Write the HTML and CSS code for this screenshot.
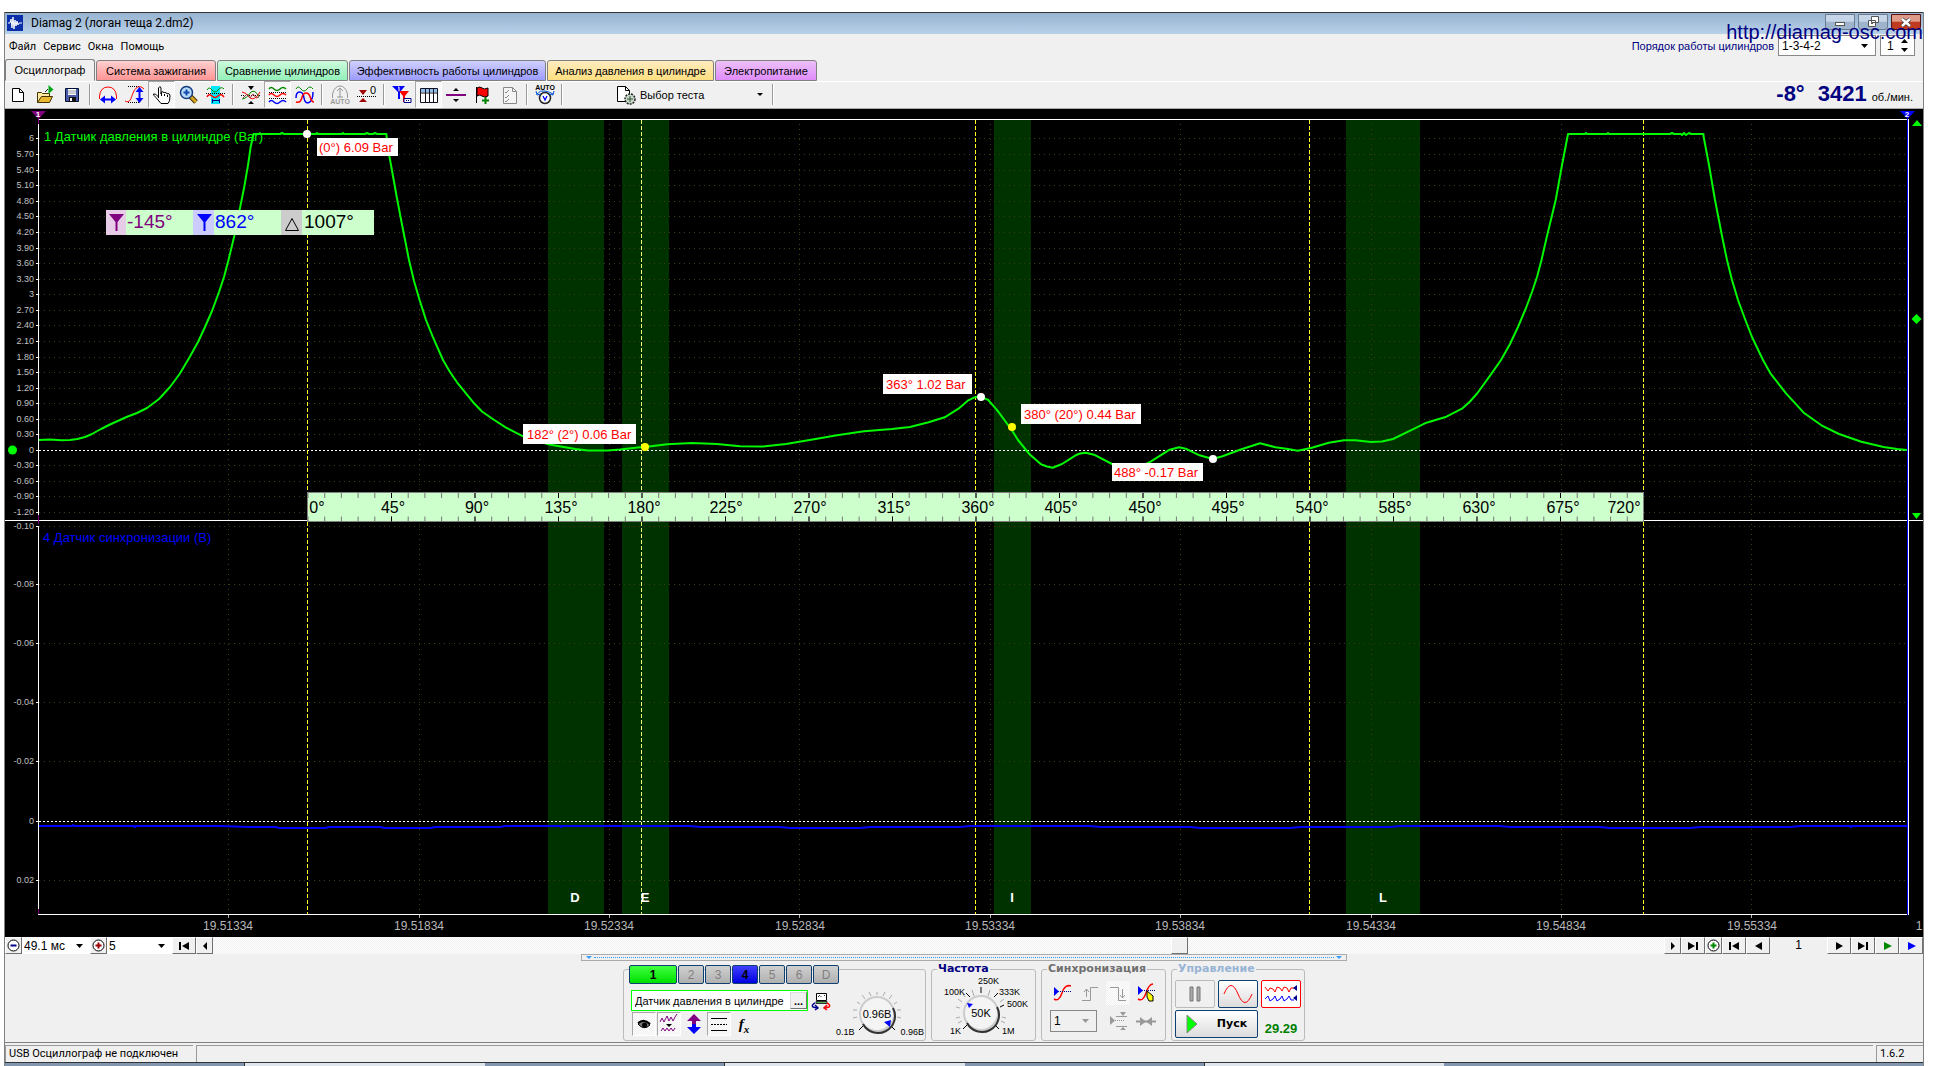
FILE: index.html
```html
<!DOCTYPE html>
<html lang="ru">
<head>
<meta charset="utf-8">
<title>Diamag 2</title>
<link rel="stylesheet" href="styles.css">
</head>
<body>
<div class="window">
  <header class="titlebar">
    <svg class="logo" width="16" height="16" viewBox="0 0 16 16"><rect width="16" height="16" fill="#0a2fa8"/><path d="M1 8h2l1-4 1 9 1-11 1 12 1-9 1 6 1-5 1 4 1-2h3" fill="none" stroke="#fff"/></svg>
    <h1 class="title">Diamag 2 (логан теща 2.dm2)</h1>
    <div class="winbtns">
      <button class="wbtn" aria-label="Свернуть"><svg width="12" height="12" viewBox="0 0 12 12"><rect x="1.500" y="6.500" width="9" height="3" fill="#fff" stroke="#555"/></svg></button>
      <button class="wbtn" aria-label="Восстановить"><svg width="12" height="12" viewBox="0 0 12 12"><path d="M4.500.5h7v6h-7zM1.500 4.500h7v6h-7z" fill="#fff" stroke="#555"/><path d="M4 7h2v1H4z" fill="#555"/></svg></button>
      <button class="wbtn close" aria-label="Закрыть"><svg width="12" height="12" viewBox="0 0 12 12"><path d="M2 3l8 7M10 3l-8 7" stroke="#444" stroke-width="4"/><path d="M2 3l8 7M10 3l-8 7" stroke="#fff" stroke-width="2.400"/></svg></button>
    </div>
  </header>
  <a class="site" href="#">http://diamag-osc.com</a>
  <nav class="menubar">
    <button>Файл</button><button>Сервис</button><button>Окна</button><button>Помощь</button>
    <div class="order">
      <label for="order">Порядок работы цилиндров</label>
      <select id="order" class="drop"><option>1-3-4-2</option></select>
      <span class="spin"><input id="cyl" type="text" value="1" aria-label="Цилиндр"><svg width="7" height="13" viewBox="0 0 7 13"><path d="M0 4l3.500-4L7 4zM0 9l3.500 4L7 9z"/></svg></span>
    </div>
  </nav>
  <div class="tabs" role="tablist">
    <button class="tab active" role="tab">Осциллограф</button>
    <button class="tab red" role="tab">Система зажигания</button>
    <button class="tab green" role="tab">Сравнение цилиндров</button>
    <button class="tab blue" role="tab">Эффективность работы цилиндров</button>
    <button class="tab yellow" role="tab">Анализ давления в цилиндре</button>
    <button class="tab violet" role="tab">Электропитание</button>
  </div>
  <div class="toolbar">
    <button class="tool" aria-label="Новый"><svg viewBox="0 0 20 20"><path d="M3.500 3.500h7l4 4v9h-11z" fill="#fff" stroke="#000"/><path d="M10.500 3.500v4h4" fill="none" stroke="#000"/></svg></button>
    <button class="tool" aria-label="Открыть"><svg viewBox="0 0 20 20"><path d="M1.500 17.500v-10h4l1 1h7v3" fill="#ffe9a0" stroke="#443300"/><path d="M1.500 17.500l4-6h11l-3 6z" fill="#e8b830" stroke="#443300"/><path d="M12.500 0v9l5-4.500z" fill="#00a818"/><path d="M9 7l3-3" stroke="#222"/></svg></button>
    <button class="tool" aria-label="Сохранить"><svg viewBox="0 0 20 20"><path d="M2.500 3.500h13v13h-13z" fill="#4a5aa8" stroke="#001030"/><path d="M5 4h8v6H5z" fill="#fff"/><path d="M5 6h8M5 8h8" stroke="#99a"/><path d="M6 12h7v5H6z" fill="#111"/><path d="M7 13h2v3H7z" fill="#fff"/></svg></button>
    <i class="sep"></i>
    <button class="tool" aria-label="Ширина"><svg viewBox="0 0 20 20"><path d="M1.500 14v-3q1-9 8.500-9t8.500 9v3" fill="none" stroke="red"/><path d="M4 14.500h12" stroke="#00f" stroke-width="2"/><path d="M2 14.500l5-4v8zM18 14.500l-5-4v8z" fill="#00f"/></svg></button>
    <button class="tool" aria-label="Высота"><svg viewBox="0 0 20 20"><path d="M3 1.500h12M3 17.500h12" stroke="#000" stroke-dasharray="1 1"/><path d="M0 16c5 3 6-3 8-8s6-9 11-4" fill="none" stroke="red"/><path d="M14.500 4v12" stroke="#00f" stroke-width="2"/><path d="M14.500 2l-4 5h8zM14.500 18l-4-5h8z" fill="#00f"/></svg></button>
    <button class="tool on" aria-label="Рука"><svg viewBox="0 0 20 20"><path d="M6.500 13V3q1.500-3 2.500 0v6l.5-2q2-1 2.500 1l.5-.5q2-.5 2.500 1.500l1-.5q2 0 2 2.500 0 6-2 7.500H9L4 12.500Q1 10 1.500 9q2-1 5 3" fill="#fff" stroke="#000"/><path d="M9.500 8v3M12.500 9v2M15.500 10v2" stroke="#000"/></svg></button>
    <button class="tool" aria-label="Масштаб"><svg viewBox="0 0 20 20"><path d="M11 11l6 6" stroke="#443300" stroke-width="5"/><path d="M11 11l6 6" stroke="#d8a020" stroke-width="3"/><circle cx="7.500" cy="7.500" r="6" fill="#b8dcf8" stroke="#123a80" stroke-width="1.500"/><path d="M4.500 7.500h6M7.500 4.500v6" stroke="#124ab0" stroke-width="2"/></svg></button>
    <button class="tool" aria-label="Фрагмент"><svg viewBox="0 0 20 20"><path d="M5 1h9v18H5z" fill="#00e8f8"/><path d="M1 5q2-4 5 0t6 0 6-1" fill="none" stroke="#080"/><path d="M1 12q2-4 5-1t6 0 6 1" fill="none" stroke="red" stroke-width="1.500"/><path d="M0 8.500h20" stroke="#000" stroke-dasharray="1 1"/><path d="M6 15.500h8M6.500 14v4M13.500 14v4" stroke="#008"/></svg></button>
    <i class="sep"></i>
    <button class="tool" aria-label="Сжать"><svg viewBox="0 0 20 20" fill="none"><path d="M0 10.500h20" stroke="#000" stroke-dasharray="1 1"/><path d="M1 14q4 0 9-7 4-3 8 5" stroke="#080"/><path d="M1 7q4 0 8 6 5 3 10-6" stroke="red"/><path d="M2 13l4-4 3 4 3-4 3 4 3-1" stroke="#a33"/><path d="M7 1h6l-3 4zM7 19h6l-3-3z" fill="#000"/></svg></button>
    <button class="tool on" aria-label="Раздельно"><svg viewBox="0 0 20 20" fill="none"><path d="M1 4q2-3 5 0t6 0 6 0" stroke="#080" stroke-width="1.500"/><path d="M1 10q2-3 5 0t6 0 6 0" stroke="red" stroke-width="1.500"/><path d="M1 17q2-3 5 0t6 0 6 0" stroke="#00f" stroke-width="1.500"/><path d="M1 7.500h18M1 13.500h18" stroke="#000" stroke-dasharray="1 1"/></svg></button>
    <button class="tool" aria-label="Вместе"><svg viewBox="0 0 20 20" fill="none"><path d="M1 4q2-4 5 0t6 0 6 0" stroke="#080"/><path d="M1 13c0-8 7-8 8 0s9 6 9-6" stroke="#00f" stroke-width="1.500"/><path d="M1 17c8 2 4-9 10-9s3 9 8 9" stroke="red" stroke-width="1.500"/></svg></button>
    <i class="sep"></i>
    <button class="tool" aria-label="Автомасштаб" disabled><svg viewBox="0 0 20 20"><path d="M2.500 13V9q2-8 7.500-8t7.500 8v4M10 4v9M7 6l3-3 3 3M7 12h6" fill="none" stroke="#999"/><text x="10" y="19" class="tiny" fill="#999">AUTO</text></svg></button>
    <button class="tool" aria-label="Ноль"><svg viewBox="0 0 20 20"><path d="M2 5h8l-4 5zM2 17h8l-4-4z" fill="#a00000"/><path d="M0 11.500h20" stroke="#000" stroke-dasharray="1 1"/><text x="13" y="9" font-size="11">0</text></svg></button>
    <i class="sep"></i>
    <button class="tool" aria-label="Маркеры"><svg viewBox="0 0 20 20"><path d="M0 1h13L8 7v7H6V7z" fill="#00f"/><path d="M7 6h10l-4 5v6h-2v-6z" fill="red"/><path d="M6 2h1v4" stroke="#fff" fill="none"/><path d="M12 13.500h7v4h-7z" fill="#fff" stroke="#008"/><path d="M14 15.500h3" stroke="#008" stroke-dasharray="1 1"/></svg></button>
    <button class="tool on" aria-label="Таблица"><svg viewBox="0 0 20 20"><path d="M1.500 3.500h17v14h-17z" fill="#fff" stroke="#112"/><path d="M2 4h16v3H2z" fill="#8cc0f0"/><path d="M1 8h18M6.500 3v14M10.500 3v14M14.500 3v14" stroke="#112"/></svg></button>
    <button class="tool" aria-label="Разделитель"><svg viewBox="0 0 20 20"><path d="M0 10h20" stroke="#800080" stroke-width="2"/><path d="M7 6h6l-3-3zM7 14h6l-3 3z"/></svg></button>
    <button class="tool" aria-label="Флаг"><svg viewBox="0 0 20 20"><path d="M3.500 2v16" stroke="#000"/><path d="M4 3q3-2 5 0t6 0v8q-4 2-6 0t-5 0z" fill="red" stroke="#000"/><path d="M9 15.500h7M12.500 12v7" stroke="#008000" stroke-width="2"/></svg></button>
    <button class="tool" aria-label="Список" disabled><svg viewBox="0 0 20 20"><path d="M3.500 2.500h9l4 4v12h-13z" fill="#f4f4f4" stroke="#888"/><path d="M12.500 2.500v4h4M5 7l1 1 3-3M5 12l1 1 3-3M5 16l1 1 3-3" fill="none" stroke="#888"/></svg></button>
    <i class="sep"></i>
    <button class="tool" aria-label="Авто напряжение"><svg viewBox="0 0 20 20"><text x="10" y="5" class="tiny">AUTO</text><circle cx="10" cy="13" r="5.500" fill="#fff" stroke="#222" stroke-width="1.500"/><path d="M8 11l2 4 2-4" fill="none" stroke="#00f" stroke-width="1.300"/><path d="M2 9q3-4 8-3t8 3M1 6l1 4 4-1M19 6l-1 4-4-1" fill="none" stroke="#0050d0"/></svg></button>
    <i class="sep"></i>
    <button class="test"><svg width="20" height="20" viewBox="0 0 20 20"><path d="M1.500 1.500h8l4 4v11h-12z" fill="#fff" stroke="#000"/><path d="M9.500 1.500v4h4" fill="none" stroke="#000"/><circle cx="14" cy="14" r="5" fill="#c8d8c8" stroke="#222" stroke-width="1.500" stroke-dasharray="2 1"/><path d="M11 14h6M14 11v6" stroke="#353"/></svg><span>Выбор теста</span><svg class="caret" width="6" height="3" viewBox="0 0 6 3"><path d="M0 0h6L3 3z"/></svg></button>
    <i class="sep"></i>
    <div class="rpm"><b>-8°</b><b>3421</b><span>об./мин.</span></div>
  </div>

  <svg class="chart" viewBox="5 109 1918 828" role="img" aria-label="Осциллограмма">
    <rect x="5" y="109" width="1918" height="828" fill="#000"/>
    <g fill="#003200">
      <rect x="548" y="120" width="56" height="794"/><rect x="622" y="120" width="47" height="794"/>
      <rect x="994" y="120" width="37" height="794"/><rect x="1346" y="120" width="74" height="794"/>
    </g>
    <g class="grid">
      <path d="M39 138.500H1907M39 154.500H1907M39 170.500H1907M39 185.500H1907M39 201.500H1907M39 216.500H1907M39 232.500H1907M39 248.500H1907M39 263.500H1907M39 279.500H1907M39 294.500H1907M39 310.500H1907M39 325.500H1907M39 341.500H1907M39 357.500H1907M39 372.500H1907M39 388.500H1907M39 403.500H1907M39 419.500H1907M39 434.500H1907M39 465.500H1907M39 481.500H1907M39 496.500H1907M39 512.500H1907M39 526.500H1907M39 584.500H1907M39 643.500H1907M39 702.500H1907M39 761.500H1907M39 880.500H1907"/>
      <path d="M228.500 124V914M419.500 124V914M609.500 124V914M799.500 124V914M990.500 124V914M1180.500 124V914M1371.500 124V914M1561.500 124V914M1751.500 124V914"/>
    </g>
    <g class="zero"><path d="M39 450.500H1907M39 821.500H1907"/></g>
    <path class="cursor" d="M307.500 120V914M975.500 120V914M1309.500 120V914M1643.500 120V914"/>
    <path class="cursor pale" d="M641.500 120V914"/>
    <g stroke="#fff" fill="none" stroke-width="1">
      <path d="M38.500 119V520M38.500 527V915M38 119.500H1909M38 914.500H1909M5 520.500H1923M1908.500 119V915"/>
      <path d="M36 138.500h3M36 154.500h3M36 170.500h3M36 185.500h3M36 201.500h3M36 216.500h3M36 232.500h3M36 248.500h3M36 263.500h3M36 279.500h3M36 294.500h3M36 310.500h3M36 325.500h3M36 341.500h3M36 357.500h3M36 372.500h3M36 388.500h3M36 403.500h3M36 419.500h3M36 434.500h3M36 450.500h3M36 465.500h3M36 481.500h3M36 496.500h3M36 512.500h3M36 526.500h3M36 584.500h3M36 643.500h3M36 702.500h3M36 761.500h3M36 821.500h3M36 880.500h3"/>
      <path stroke="#aaa" d="M228.500 915v3M419.500 915v3M609.500 915v3M799.500 915v3M990.500 915v3M1180.500 915v3M1371.500 915v3M1561.500 915v3M1751.500 915v3"/>
    </g>
    <path d="M1907.500 119V915" stroke="#00f"/>
    <path d="M38.500 118v6M38.500 515v9M38.500 909v5" stroke="#800080"/>
    <g class="ylab">
      <text x="34" y="141">6</text><text x="34" y="157">5.70</text><text x="34" y="173">5.40</text><text x="34" y="188">5.10</text><text x="34" y="204">4.80</text><text x="34" y="219">4.50</text><text x="34" y="235">4.20</text><text x="34" y="251">3.90</text><text x="34" y="266">3.60</text><text x="34" y="282">3.30</text><text x="34" y="297">3</text><text x="34" y="313">2.70</text><text x="34" y="328">2.40</text><text x="34" y="344">2.10</text><text x="34" y="360">1.80</text><text x="34" y="375">1.50</text><text x="34" y="391">1.20</text><text x="34" y="406">0.90</text><text x="34" y="422">0.60</text><text x="34" y="437">0.30</text><text x="34" y="453">0</text><text x="34" y="468">-0.30</text><text x="34" y="484">-0.60</text><text x="34" y="499">-0.90</text><text x="34" y="515">-1.20</text>
      <text x="34" y="529">-0.10</text><text x="34" y="587">-0.08</text><text x="34" y="646">-0.06</text><text x="34" y="705">-0.04</text><text x="34" y="764">-0.02</text><text x="34" y="824">0</text><text x="34" y="883">0.02</text>
    </g>
    <g class="xlab">
      <text x="228" y="930">19.51334</text><text x="419" y="930">19.51834</text><text x="609" y="930">19.52334</text><text x="800" y="930">19.52834</text><text x="990" y="930">19.53334</text><text x="1180" y="930">19.53834</text><text x="1371" y="930">19.54334</text><text x="1561" y="930">19.54834</text><text x="1752" y="930">19.55334</text><text x="1919" y="930">1</text>
    </g>
    <text class="chan" x="44" y="141" fill="#0f0">1 Датчик давления в цилиндре (Bar)</text>
    <text class="chan" x="43" y="542" fill="#00f">4 Датчик синхронизации (В)</text>
    <path class="trace" d="M39 440L50 439.500 61 440.300 70 440 77.500 439 85 437 92 434 101 429 110 424.500 126.500 417 137 413 147 408 159 399 170 387 179.600 374 190 356.500 198 342 205 327 212 311 219 292 224 277 228.500 260 234.300 236 240 208 244.300 186.700 248.300 163.300 250.700 146.700 253.500 134H280l2-1 2 1h32l1-1 1 1h24l1-1 1 1h21l2-1 2 1h4l2-1 2 1H386.500V136L389.500 156.700 396.700 196.700 401.700 223 409 260 414 281 419.600 300 426 320 432.700 336.700 443 360 450 372 457 382.300 473.500 402.700 482 411.500 492 418.500 506 427.700 523 436.300 549 444.500 575.500 449 588 450.500 608 450.500 620 449.500 640 447.300 645 447 667 444.300 692 443 717 444 740 446.300 763 446.500 786 444 814 439.300 837 435.300 864 431.300 892 429 910 427 928.600 422.300 944.700 417.300 958.500 408.700 967.700 400.700 974.500 397.300 980.500 396.700 988.300 400 997.500 410.700 1011.700 430 1018 440 1029.600 454.300 1041 464.300 1047 466.500 1052.600 467.700 1062 464 1075.600 455.300 1080 453.500 1085.700 452.700 1094 454.700 1112 464 1131 472 1151 461.300 1169.700 449.700 1179 447.300 1185.700 448.700 1199.500 455.300 1212.800 459 1222.500 456.300 1240 449.700 1260 443.300 1275.500 447.300 1288 449 1297.700 450.700 1311 448 1328.800 442.700 1344 440.300 1355.400 440.300 1371 442 1382 441.500 1393 439 1408.700 431.300 1426.400 422.700 1446.400 416.700 1462 408.700 1470 401.500 1477.500 393 1490.800 374.700 1501 360 1510 344 1518 327 1526 308 1532 292 1537 277 1541.500 260 1547 236 1555.700 200 1561.700 166.700 1568 134H1585l1-1 1 1h20l1-1 1 1h61l2-1 2 1h7l1 1 2-2 2 2 3-2 2 1H1703.500V136L1709 165 1715 200 1722 236 1727 260 1732 280 1738 300 1745 319 1752 337 1763 360 1770.400 373.300 1786 393.300 1803.700 412.700 1821.400 425.300 1839 434 1861.400 441.700 1883.600 447 1897 449 1907 450"/>
    <path class="trace second" d="M39 826H72l1-1 1 1h60l1 1 1-1h84L250 827H275L280 828H325L330 827H380L385 828H430L435 827H500L505 826H560l1 1 1-1H690L700 827H780L790 828H860L870 827H960L970 826H1090L1100 827H1190L1200 828H1290L1300 827H1390L1400 826H1500L1510 827H1600L1610 828H1690L1700 827H1790L1800 826H1850l1 1 1-1H1907"/>

    <g>
      <rect x="307.500" y="492.500" width="1336" height="29" fill="#cfc" stroke="#808080"/>
      <g fill="none" stroke-width="5">
        <path d="M307.500 495.500H1643M307.500 519H1643" stroke="#777" stroke-dasharray="1 15.700"/>
        <path d="M391 495.500H1643M391 519H1643" stroke="#000" stroke-dasharray="1 82.500"/>
      </g>
      <g class="rlab"><text x="317" y="513">0°</text><text x="393" y="513">45°</text><text x="477" y="513">90°</text><text x="561" y="513">135°</text><text x="644" y="513">180°</text><text x="726" y="513">225°</text><text x="810" y="513">270°</text><text x="894" y="513">315°</text><text x="978" y="513">360°</text><text x="1061" y="513">405°</text><text x="1145" y="513">450°</text><text x="1228" y="513">495°</text><text x="1312" y="513">540°</text><text x="1395" y="513">585°</text><text x="1479" y="513">630°</text><text x="1563" y="513">675°</text><text x="1624" y="513">720°</text></g>
    </g>

    <g>
      <rect x="106" y="210" width="268" height="25" fill="#cfc"/>
      <rect x="106" y="210" width="20" height="25" fill="#e6cce6"/><rect x="193" y="210" width="21" height="25" fill="#ccf"/><rect x="281" y="210" width="21" height="25" fill="#ccc"/>
      <path d="M109 214h15l-6.500 8v9h-2v-9z" fill="#800080"/><path d="M197 214h15l-6.500 8v9h-2v-9z" fill="#00f"/><path d="M285.500 230.500h13l-6.500-12z" fill="none" stroke="#000"/>
      <g font-size="19"><text x="127" y="228" fill="#800080">-145°</text><text x="215" y="228" fill="#00f">862°</text><text x="304" y="228">1007°</text></g>
    </g>

    <g fill="#fff"><rect x="317" y="138" width="81" height="18"/><rect x="523" y="424" width="113" height="20"/><rect x="883" y="374" width="89" height="20"/><rect x="1021" y="404" width="120" height="20"/><rect x="1112" y="463" width="91" height="18"/></g>
    <g font-size="13" fill="red"><text x="319" y="152">(0°) 6.09 Bar</text><text x="527" y="439">182° (2°) 0.06 Bar</text><text x="886" y="389">363° 1.02 Bar</text><text x="1024" y="419">380° (20°) 0.44 Bar</text><text x="1114" y="477">488° -0.17 Bar</text></g>
    <g fill="#fff"><circle cx="307" cy="134" r="4"/><circle cx="981" cy="397" r="4"/><circle cx="1213" cy="459" r="4"/></g>
    <g fill="#ff0"><circle cx="645" cy="447" r="4"/><circle cx="1012" cy="427" r="4"/></g>
    <g class="phase"><text x="575" y="902">D</text><text x="645" y="902">E</text><text x="1012" y="902">I</text><text x="1383" y="902">L</text></g>
    <circle cx="12.500" cy="450" r="4.500" fill="#0f0"/>
    <path d="M1912 126h10l-5-6zM1916.500 314l5 5-5 5-5-5zM1912 513h9l-4.500 6z" fill="#0f0"/>
    <path d="M31 111h15l-7.500 8z" fill="#800080"/><path d="M1900 111h15l-7.500 8z" fill="#00f"/>
    <g class="mark"><text x="38" y="117">1</text><text x="1907" y="117">2</text></g>
  </svg>

  <div class="strip">
    <button class="sb w17" aria-label="Уменьшить"><svg width="13" height="13" viewBox="0 0 13 13"><circle cx="6.500" cy="6.500" r="5.500" fill="#fff" stroke="#000"/><path d="M3.500 6.500h6" stroke="#008" stroke-width="2"/></svg></button>
    <select class="drop flat w68" aria-label="Развёртка"><option>49.1 мс</option></select>
    <button class="sb w17" aria-label="Увеличить"><svg width="13" height="13" viewBox="0 0 13 13"><circle cx="6.500" cy="6.500" r="5.500" fill="#fff" stroke="#000"/><path d="M3.500 6.500h6M6.500 3.500v6" stroke="#900" stroke-width="2"/></svg></button>
    <select class="drop flat w65" aria-label="Шаг"><option>5</option></select>
    <button class="sb w24" aria-label="В начало"><svg width="12" height="8" viewBox="0 0 12 8"><path d="M1 0h2v8H1zM11 0v8L4 4z"/></svg></button>
    <button class="sb w17" aria-label="Назад"><svg width="6" height="8" viewBox="0 0 6 8"><path d="M5 0v8L1 4z"/></svg></button>
    <div class="track"><span class="thumb"></span></div>
    <button class="sb w17" aria-label="Вперёд"><svg width="6" height="8" viewBox="0 0 6 8"><path d="M1 0v8l4-4z"/></svg></button>
    <button class="sb w24" aria-label="В конец"><svg width="12" height="8" viewBox="0 0 12 8"><path d="M9 0h2v8H9zM1 0v8l7-4z"/></svg></button>
    <button class="sb w17" aria-label="Добавить"><svg width="13" height="13" viewBox="0 0 13 13"><circle cx="6.500" cy="6.500" r="5.500" fill="#fff" stroke="#000"/><path d="M3.500 6.500h6M6.500 3.500v6" stroke="#080" stroke-width="2"/></svg></button>
    <button class="sb w24" aria-label="Первый"><svg width="12" height="8" viewBox="0 0 12 8"><path d="M1 0h2v8H1zM11 0v8L4 4z"/></svg></button>
    <button class="sb w24" aria-label="Предыдущий"><svg width="9" height="8" viewBox="0 0 9 8"><path d="M8 0v8L1 4z"/></svg></button>
    <span class="frame">1</span>
    <button class="sb w24" aria-label="Следующий"><svg width="9" height="8" viewBox="0 0 9 8"><path d="M1 0v8l7-4z"/></svg></button>
    <button class="sb w24" aria-label="Последний"><svg width="12" height="8" viewBox="0 0 12 8"><path d="M9 0h2v8H9zM1 0v8l7-4z"/></svg></button>
    <button class="sb w24" aria-label="Проиграть"><svg width="9" height="8" viewBox="0 0 9 8"><path d="M1 0v8l8-4z" fill="#080"/></svg></button>
    <button class="sb w24" aria-label="Далее"><svg width="9" height="8" viewBox="0 0 9 8"><path d="M1 0v8l8-4z" fill="#00f"/></svg></button>
  </div>

  <div class="panel">
    <div class="splitter"><i></i></div>
    <div class="groups">
      <section class="group channel">
        <div class="chans"><button class="ch c1">1</button><button class="ch">2</button><button class="ch">3</button><button class="ch c4">4</button><button class="ch">5</button><button class="ch">6</button><button class="ch">D</button></div>
        <div class="chbody">
          <div class="chleft">
            <div class="row"><div class="sensor"><input type="text" value="Датчик давления в цилиндре" aria-label="Датчик"><button class="more">...</button></div><svg width="20" height="20" viewBox="0 0 20 20"><path d="M5.500 2.500h10v7h-10z" fill="#fff" stroke="#000"/><path d="M5 10.500h11v2H5z" fill="#5a5" stroke="#333"/><path d="M7 6l2-2M10 5v1M13 5l1-1" stroke="#333"/><path d="M4 12q-4 2-2 4l4 1M4 14l3 3-3 2" fill="none" stroke="#008" stroke-width="1.500"/><path d="M16 12q4 2 2 4l-4 1M16 14l-3 3 3 2" fill="none" stroke="red" stroke-width="1.500"/></svg></div>
            <div class="row minis">
              <button class="mini on" aria-label="Показать"><svg viewBox="0 0 20 20"><path d="M4 10q6-6 12 1-6 6-12-1z" fill="#777" stroke="#000"/><circle cx="10.500" cy="11" r="2.500"/><path d="M4 9q6-5 12 1" fill="none" stroke="#000" stroke-width="2"/></svg></button>
              <button class="mini on" aria-label="Фильтр"><svg viewBox="0 0 20 20"><path d="M1 8l2-4 2 4 3-6 2 5 2-4 2 4 2-4 2-3M2 17l2-3 2 3 2-3 2 3 2-3 2 3 2-3" fill="none" stroke="#800080"/><path d="M7 10h6l-3 3z"/></svg></button>
              <button class="mini" aria-label="Инверсия"><svg viewBox="0 0 20 20"><path d="M10 0l7 7h-5v4H8V7H3z" fill="#800080"/><path d="M10 20l7-7h-5v-3H8v3H3z" fill="#00f"/></svg></button>
              <button class="mini on" aria-label="Линии"><svg viewBox="0 0 20 20"><path d="M2 4.500h16M2 16.500h16" stroke="#000"/><path d="M2 10.500h16" stroke="#000" stroke-dasharray="2 1"/></svg></button>
              <button class="mini fx" aria-label="Формула">f<sub>x</sub></button>
            </div>
          </div>
          <svg class="knob" width="92" height="60" viewBox="834 980 92 60" role="img" aria-label="Усиление">
            <g stroke="#aaa"><path d="M878 995v-3M872 996l-2-4M884 996l2-4M866 999l-3-4M890 999l3-4M861 1004l-3-2M895 1004l3-2M858 1010h-4M898 1010h4M858 1017l-4 1M898 1017l4 1"/></g>
            <path d="M864 1026l-4 4M892 1026l4 4" stroke="#000"/>
            <circle cx="878" cy="1014" r="17" fill="#f4f4f4" stroke="#ccc" stroke-width="2"/><path d="M864 1024A17 17 0 0 0 894 1008" fill="none" stroke="#333" stroke-width="2"/>
            <path d="M885 1022l7-2-1 7z" fill="#00f"/>
            <text x="878" y="1018" font-size="11" text-anchor="middle">0.96В</text><text x="837" y="1035">0.1В</text><text x="925" y="1035" text-anchor="end">0.96В</text>
          </svg>
        </div>
      </section>
      <fieldset class="group freq"><legend>Частота</legend>
        <svg class="knob" width="96" height="64" viewBox="937 976 96 64" role="img" aria-label="Частота">
          <g stroke="#aaa"><path d="M974 997l-2-6M988 997l2-6M962 1003l-4-3M1000 1003l4-3M960 1009l-4-1M1002 1018l4 1M960 1018l-4 1M962 1022l-4 2M1001 1022l4 2M965 998l-2-3"/></g>
          <path d="M981 994v-6M970 998l-4-4M994 998l4-4M1000 1008l4-2M967 1026l-4 4M995 1026l4 4" stroke="#000"/>
          <circle cx="981" cy="1014" r="17" fill="#f4f4f4" stroke="#ccc" stroke-width="2"/><path d="M967 1024A17 17 0 0 0 997 1008" fill="none" stroke="#333" stroke-width="2"/>
          <path d="M967 1004l6 1-4 4z" fill="#00f"/>
          <text x="981" y="1018" font-size="11" text-anchor="middle">50K</text><text x="978" y="985">250K</text><text x="944" y="996">100K</text><text x="999" y="996">333K</text><text x="1007" y="1008">500K</text><text x="950" y="1035">1K</text><text x="1002" y="1035">1M</text>
        </svg>
      </fieldset>
      <fieldset class="group sync"><legend>Синхронизация</legend>
        <div class="syncgrid">
          <button class="mini" aria-label="Уровень"><svg viewBox="0 0 20 20"><path d="M2 16q5 3 8-6t9-7" fill="none" stroke="red" stroke-width="1.500"/><path d="M2 8.500h17" stroke="#008" stroke-dasharray="1 1"/><path d="M2 4v9l5-4.500z" fill="#00f"/></svg></button>
          <button class="mini" aria-label="Фронт" disabled><svg viewBox="0 0 20 20"><path d="M2 17.500h8.500v-13H18M6.500 14V6M4 9l2.500-3L9 9" fill="none" stroke="#999"/></svg></button>
          <button class="mini soft" aria-label="Спад" disabled><svg viewBox="0 0 20 20"><path d="M2 4.500h8.500v13H18M14.500 6v9M12 12l2.500 3 2.500-3" fill="none" stroke="#999"/></svg></button>
          <button class="mini" aria-label="Захват"><svg viewBox="0 0 20 20"><path d="M2 16q5 3 8-6t7-9" fill="none" stroke="red" stroke-width="1.500"/><path d="M2 7.500h17" stroke="#008" stroke-dasharray="1 1"/><path d="M2 3v9l5-4.500z" fill="#00f"/><path d="M11 8l6 5v5h-4l-2-4z" fill="#ff0" stroke="#000"/></svg></button>
          <select class="drop gray" aria-label="Канал синхронизации" disabled><option>1</option></select>
          <button class="mini" aria-label="Окно" disabled><svg viewBox="0 0 20 20"><path d="M2 5v9l5-4.500z" fill="#999"/><path d="M7 9.500h10" stroke="#999" stroke-dasharray="1 1"/><path d="M8 5.500h11M8 15.500h11" stroke="#999"/><path d="M12 1h6l-3 4zM12 19h6l-3-3z" fill="#999"/></svg></button>
          <button class="mini" aria-label="Сближение" disabled><svg viewBox="0 0 20 20"><path d="M0 10.500h20" stroke="#999" stroke-width="2"/><path d="M4 6l6 4.500L4 15zM16 6l-6 4.500 6 4.500z" fill="#999"/></svg></button>
        </div>
      </fieldset>
      <fieldset class="group ctl"><legend>Управление</legend>
        <div class="ctlgrid">
          <button class="big off" aria-label="Пауза" disabled><svg width="12" height="16" viewBox="0 0 12 16"><path d="M1 1h3v14H1zM8 1h3v14H8z" fill="#aaa" stroke="#777"/></svg></button>
          <button class="big" aria-label="Синус"><svg width="30" height="20" viewBox="0 0 30 20"><path d="M1 10q7-17 14 0t14 0" fill="none" stroke="red"/></svg></button>
          <button class="big hot" aria-label="Каналы"><svg width="34" height="22" viewBox="0 0 34 22" fill="none"><path d="M1 4l3 4 2-3 3 1 2 3 2-5 3 1 2 3 2-4 3 1 2 4 2-4 3 0" stroke="red"/><path d="M1 16l3-3 2 5 3-2 2-3 2 5 3-2 2-3 2 5 3-2 2-3 2 4 3 0" stroke="#00f"/><path d="M33 2v6l-4-3zM33 12v6l-4-3z" fill="#008"/></svg></button>
          <button class="big run"><svg width="11" height="18" viewBox="0 0 11 18"><path d="M1 0v18l10-9z" fill="#0f0" stroke="#888"/></svg><span>Пуск</span></button>
          <output class="fps">29.29</output>
        </div>
      </fieldset>
    </div>
  </div>
  <footer class="status"><span>USB Осциллограф не подключен</span><span></span><span>1.6.2</span></footer>
  <div class="taskbar"><i></i><b></b><i></i><b></b><i></i><b></b><i></i><i></i></div>
</div>
</body>
</html>
```
FILE: styles.css
```css
* { box-sizing: border-box; }
body {
  margin: 0;
  padding: 12px 12px 0 4px;
  background: #fff;
  color: #000;
  font: 11px/16px "Liberation Sans", Arial, sans-serif;
}
button, select, input { font: inherit; color: inherit; margin: 0; }
button { padding: 0; border: 0; background: none; }
svg text { font-family: "Liberation Sans", Arial, sans-serif; }

.window {
  position: relative;
  border-left: 1px solid #808080;
  border-right: 1px solid #808080;
  background: #f0f0f0;
}

/* Title bar */
.titlebar {
  display: flex;
  gap: 8px;
  height: 22px;
  padding: 1px 2px 0;
  border-top: 1px solid #333;
  background: linear-gradient(#98b4d0, #b8d0ea);
}
.logo { margin-top: 1px; }
.title {
  flex: 1;
  margin: 0;
  font: 12px/18px Roboto, "Noto Sans", sans-serif;
}
.winbtns { display: flex; gap: 3px; }
.wbtn {
  display: grid;
  place-items: center;
  width: 30px;
  height: 16px;
  border: 1px solid #6b7c90;
  border-radius: 0 0 3px 3px;
  background: linear-gradient(#c6d6e8 45%, #9db4cc 50%);
}
.wbtn.close { border-color: #5a1410; background: linear-gradient(#e09a88 45%, #c03a20 50%); }
.site {
  position: absolute;
  top: 8px;
  right: 0;
  z-index: 1;
  color: #000080;
  font-size: 20px;
  line-height: 24px;
  text-decoration: none;
}

/* Menu */
.menubar {
  display: flex;
  gap: 7px;
  height: 25px;
  padding-left: 4px;
  font: 11px/16px Roboto, "Noto Sans", sans-serif;
}
.menubar > button { height: 25px; padding-top: 1px; }
.order {
  display: flex;
  gap: 4px;
  align-items: center;
  height: 22px;
  margin-left: auto;
  padding: 1px 8px 0 0;
  font: 11px/16px "Liberation Sans", Arial, sans-serif;
}
.order label { color: #000080; }
.drop {
  appearance: none;
  width: 98px;
  height: 21px;
  padding: 0 3px;
  border: 1px solid #888;
  border-radius: 0;
  background: #fff url("data:image/svg+xml,%3Csvg xmlns='http://www.w3.org/2000/svg' width='7' height='4'%3E%3Cpath d='M0 0h7L3.500 4z'/%3E%3C/svg%3E") no-repeat right 7px center;
  color: #000;
  font: 12px/16px "Liberation Sans", Arial, sans-serif;
}
.spin {
  display: flex;
  align-items: center;
  width: 35px;
  height: 21px;
  padding: 0 6px;
  border: 1px solid #888;
  background: #fff;
}
.spin input { width: 14px; border: 0; padding: 0; background: none; font: 12px/16px "Liberation Sans", Arial, sans-serif; }

/* Tabs */
.tabs { display: flex; gap: 1px; align-items: flex-end; height: 22px; }
.tab {
  height: 21px;
  border: 1px solid #808080;
  border-radius: 3px 3px 0 0;
  white-space: nowrap;
}
.tab.active { width: 90px; height: 22px; border-bottom-color: #f0f0f0; background: #f0f0f0; }
.tab.red { width: 120px; background: linear-gradient(#ffd0d0, #ff9494); }
.tab.green { width: 131px; background: linear-gradient(#ccfadc, #94f0b8); }
.tab.blue { width: 197px; background: linear-gradient(#d0d0ff, #9c9cff); }
.tab.yellow { width: 167px; background: linear-gradient(#ffecc0, #ffdf80); }
.tab.violet { width: 102px; background: linear-gradient(#ecc0f8, #e08cfc); }

/* Toolbar */
.toolbar {
  display: flex;
  align-items: stretch;
  height: 28px;
  border-bottom: 1px solid #aaa;
  box-shadow: inset 0 1px #fff;
}
.tool { display: grid; place-items: center; width: 27px; }
.tool svg, .mini svg { width: 20px; height: 20px; }
.on {
  border: 1px solid #a8a8a8;
  border-right-color: #fff;
  border-bottom-color: #fff;
}
.on, .soft, .track { background: repeating-conic-gradient(#fff 0 25%, #f0f0f0 0 50%) 0 0 / 2px 2px; }
.sep { width: 8px; background: linear-gradient(90deg, transparent 3px, #999 3px 4px, #fff 4px 5px, transparent 5px); margin: 3px 0; }
.tiny { font-size: 7px; font-weight: bold; text-anchor: middle; }
.test { display: flex; align-items: center; gap: 4px; width: 203px; padding: 0 6px 0 50px; }
.caret { margin-left: auto; }
.rpm { display: flex; align-items: baseline; margin-left: auto; padding-right: 10px; color: #000080; }
.rpm b { margin-right: 13px; font-size: 22px; line-height: 26px; }
.rpm b + b { margin-right: 5px; }
.rpm span { color: #000; font-size: 11px; }

/* Chart */
.chart { display: block; width: 100%; height: auto; }
.grid path { stroke: #3c3c10; stroke-dasharray: 1 4; }
.zero path { stroke: #fff; stroke-dasharray: 2 2; }
.cursor { stroke: #ffff20; stroke-dasharray: 4 2; }
.cursor.pale { stroke: #f0ff70; }
.ylab { fill: #c0c0c0; font-size: 9px; text-anchor: end; }
.xlab { fill: #b8b8b8; font-size: 12px; text-anchor: middle; }
.rlab { font-size: 16px; text-anchor: middle; }
.chan { font-size: 13px; }
.mark { fill: #fff; font-size: 8px; font-weight: bold; text-anchor: middle; }
.phase { fill: #fff; font-size: 13px; font-weight: bold; text-anchor: middle; }
.trace { fill: none; stroke: #00f800; stroke-width: 2; stroke-linejoin: round; }
.trace.second { stroke: #00f; }

/* Navigation strip */
.strip { display: flex; height: 17px; background: #fff; font-size: 12px; }
.sb {
  display: grid;
  place-items: center;
  height: 17px;
  border: 1px solid #fff;
  border-right-color: #707070;
  border-bottom-color: #707070;
  background: #f0f0f0;
}
.w17 { width: 17px; }
.w24 { width: 24px; }
.w65 { width: 65px; }
.w68 { width: 68px; }
.drop.flat { height: 17px; border: 0; padding: 0 2px; background-color: #fff; }
.track { flex: 1; }
.thumb {
  display: block;
  width: 17px;
  height: 17px;
  margin-left: 66%;
  border: 1px solid #fff;
  border-right-color: #707070;
  border-bottom-color: #707070;
  background: #f0f0f0;
}
.frame { width: 57px; background: #f0f0f0; text-align: center; }

/* Bottom panel */
.panel { display: flex; flex-direction: column; align-items: center; height: 89px; border-bottom: 1px solid #808080; }
.splitter { width: 766px; height: 7px; padding: 2px 12px; border: 1px solid #aaa; position: relative; }
.splitter i { display: block; border-top: 1px dotted #3a9cf4; }
.splitter::before, .splitter::after {
  content: "";
  position: absolute;
  top: 1px;
  left: 4px;
  border: 3px solid transparent;
  border-top-color: #3a9cf4;
}
.splitter::after { left: auto; right: 4px; }
.groups { display: flex; gap: 5px; align-items: flex-end; height: 80px; }
.group { height: 72px; margin: 0; padding: 0; border: 1px solid #bbb; border-radius: 3px; min-width: 0; }
.group legend { margin-left: 5px; padding: 0 1px; font: bold 11px/14px "DejaVu Sans", sans-serif; }
fieldset.group { height: 79px; }
.channel { width: 303px; }
.freq { width: 105px; color: #000080; }
.sync { width: 125px; }
.sync legend { color: #707070; }
.ctl { width: 134px; }
.ctl legend { color: #98b4d4; }
.chans { display: flex; gap: 1px; margin: -5px 0 0 5px; }
.ch {
  width: 26px;
  height: 19px;
  border: 1px solid #104070;
  border-radius: 2px;
  background: linear-gradient(#d0d0d0, #b0b0b0);
  color: #808080;
  font-size: 12px;
}
.ch.c1 { width: 48px; background: linear-gradient(#40ff40, #00e000); color: #000; font-weight: bold; }
.ch.c4 { background: linear-gradient(#4040ff, #0000e0); color: #000; font-weight: bold; }
.chbody { display: flex; justify-content: space-between; align-items: flex-start; }
.chbody .knob { margin-top: -4px; }
.chleft { padding: 6px 0 0 7px; }
.row { display: flex; align-items: center; gap: 3px; }
.sensor { display: flex; align-items: center; width: 177px; height: 21px; border: 1px solid #0f0; background: #fff; }
.sensor input { flex: 1; min-width: 0; border: 0; padding: 0 0 0 3px; background: none; }
.more { width: 17px; height: 17px; border: 1px solid #ddd; border-right-color: #777; border-bottom-color: #777; background: #f0f0f0; font-weight: bold; line-height: 8px; }
.minis { gap: 1px; margin: 1px 0 0 1px; }
.mini { display: grid; place-items: center; width: 24px; height: 24px; }
.fx { display: block; font: italic bold 15px/16px "Liberation Serif", serif; }
.fx sub { font-size: 11px; line-height: 0; }
.knob { display: block; font-size: 9px; }
.freq .knob { margin: -1px 0 0 5px; }
.syncgrid { display: grid; grid-template-columns: repeat(4, 28px); gap: 4px 0; padding: 5px 0 0 6px; justify-items: center; align-items: center; }
.syncgrid .gray {
  grid-column: span 2;
  justify-self: start;
  margin-left: 2px;
  width: 47px;
  height: 22px;
  background: #f0f0f0 url("data:image/svg+xml,%3Csvg xmlns='http://www.w3.org/2000/svg' width='7' height='4'%3E%3Cpath d='M0 0h7L3.500 4z' fill='%23999'/%3E%3C/svg%3E") no-repeat right 7px center;
  opacity: 1;
}
.ctlgrid { display: grid; grid-template-columns: repeat(3, 40px); gap: 2px 3px; padding: 4px 0 0 3px; align-items: end; }
.big {
  display: flex;
  align-items: center;
  justify-content: center;
  height: 28px;
  border: 1px solid #104070;
  border-radius: 2px;
  background: linear-gradient(#fff, #dcdcdc);
}
.big.off { border-color: #bbb; background: #f0f0f0; }
.big.hot { border: 1px solid red; background: #fff; }
.run { grid-column: span 2; gap: 20px; font: bold 11px/16px "DejaVu Sans", sans-serif; }
.fps { color: #008000; font: bold 13px/18px "Liberation Sans", Arial, sans-serif; text-align: center; }

/* Status bar and the edge of the taskbar below */
.status { display: flex; gap: 3px; height: 19px; padding-top: 2px; font: 11px/16px Roboto, "Noto Sans", sans-serif; }
.status span { width: 188px; padding-left: 3px; border-left: 1px solid #999; border-top: 1px solid #999; white-space: nowrap; }
.status span:nth-child(2) { flex: 1; }
.status span:last-child { width: 47px; }
.taskbar { display: flex; height: 4px; border-top: 1px solid #333; background: #8296b0; }
.taskbar i { flex: 1; }
.taskbar b { flex: 1; border-left: 1px solid #333; background: #dfe6ee; }
```
